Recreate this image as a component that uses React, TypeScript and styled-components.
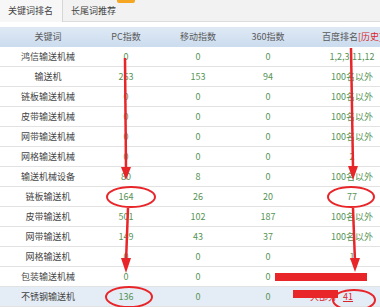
import styled, { createGlobalStyle } from "styled-components";

const GlobalStyle = createGlobalStyle`
  html, body {
    margin: 0;
    padding: 0;
    background: #fff;
    overflow: hidden;
  }
  body {
    font-family: "Noto Sans CJK SC", "Noto Sans", sans-serif;
  }
`

interface RankRow {
  keyword: string;
  pc: string;
  mobile: string;
  so: string;
  baidu: string;
}

const rows: RankRow[] = [
  { keyword: '鸿信输送机械', pc: '0', mobile: '0', so: '0', baidu: '1,2,3,11,12' },
  { keyword: '输送机', pc: '263', mobile: '153', so: '94', baidu: '100名以外' },
  { keyword: '链板输送机械', pc: '0', mobile: '0', so: '0', baidu: '100名以外' },
  { keyword: '皮带输送机械', pc: '0', mobile: '0', so: '0', baidu: '100名以外' },
  { keyword: '网带输送机械', pc: '0', mobile: '0', so: '0', baidu: '100名以外' },
  { keyword: '网格输送机械', pc: '0', mobile: '0', so: '0', baidu: '2' },
  { keyword: '输送机械设备', pc: '80', mobile: '8', so: '0', baidu: '100名以外' },
  { keyword: '链板输送机', pc: '164', mobile: '26', so: '20', baidu: '77' },
  { keyword: '皮带输送机', pc: '501', mobile: '102', so: '187', baidu: '100名以外' },
  { keyword: '网带输送机', pc: '149', mobile: '43', so: '37', baidu: '100名以外' },
  { keyword: '网格输送机', pc: '0', mobile: '0', so: '0', baidu: '1' },
  { keyword: '包装输送机械', pc: '0', mobile: '0', so: '0', baidu: '' },
]

const Page = styled.div`
  position: relative;
  width: 380px;
  height: 307px;
  overflow: hidden;
`

const TabBar = styled.div`
  position: relative;
  display: flex;
  height: 22px;
  box-sizing: border-box;
  background: #f2f2f2;
  border-bottom: 1px solid #dcdcdc;
`

const Tab = styled.div<{ $active?: boolean }>`
  height: ${({ $active }) => ($active ? '22px' : '21px')};
  box-sizing: border-box;
  padding: 0 9px 0 8px;
  font-size: 9px;
  line-height: 21px;
  color: #444;
  background: ${({ $active }) => ($active ? '#f7f7f7' : 'transparent')};
  border-right: ${({ $active }) => ($active ? '1px solid #d6d6d6' : 'none')};
`

const Badge = styled.span`
  position: absolute;
  top: -2px;
  left: 117px;
  width: 18px;
  height: 5px;
  border-radius: 2px;
  background: #f5a623;
`

const Gap = styled.div`
  height: 5px;
`

const Table = styled.div`
  width: 408px;
  font-size: 9px;
`

const Row = styled.div<{ $head?: boolean; $highlight?: boolean }>`
  display: grid;
  grid-template-columns: 96px 60px 84px 56px 112px;
  height: 20px;
  box-sizing: border-box;
  align-items: center;
  background: ${({ $head, $highlight }) =>
    $head ? 'linear-gradient(#dfe9f5, #cbdcee)' : $highlight ? '#e4ecf6' : '#fff'};
  border-bottom: ${({ $head }) => ($head ? 'none' : '1px solid #e2e2e2')};
`

const Cell = styled.div<{ $kind?: 'head' | 'word' | 'num'; $left?: boolean }>`
  text-align: ${({ $left }) => ($left ? 'left' : 'center')};
  padding-left: ${({ $left }) => ($left ? '14px' : '0')};
  white-space: nowrap;
  line-height: 20px;
  color: ${({ $kind }) => ($kind === 'head' ? '#5a5a5a' : $kind === 'word' ? '#444' : '#559455')};
`

const History = styled.span`
  color: #d8262a;
`

const Note = styled.span`
  color: #d8262a;
  margin-right: 6px;
`

const RankLink = styled.a`
  color: #d8262a;
  text-decoration: underline;
`

const Marks = styled.svg`
  position: absolute;
  left: 0;
  top: 0;
  pointer-events: none;
`

function Annotations() {
  const red = '#e8262a';
  return (
    <Marks width="380" height="307" viewBox="0 0 380 307">
      <g stroke={red} strokeWidth="2.5" fill="none">
        <line x1="125" y1="58" x2="126" y2="170" />
        <line x1="351" y1="48" x2="353" y2="168" />
        <line x1="128" y1="208" x2="126" y2="262" />
        <line x1="353" y1="208" x2="355" y2="262" />
        <ellipse cx="131" cy="197" rx="24" ry="10" strokeWidth="2" />
        <ellipse cx="351" cy="197" rx="23" ry="10" strokeWidth="2" />
        <ellipse cx="129" cy="297" rx="23" ry="10" strokeWidth="2" />
        <ellipse cx="354" cy="300" rx="21" ry="10" strokeWidth="2" />
      </g>
      <g fill={red}>
        <polygon points="121,167 131,167 126,180" />
        <polygon points="348,166 358,166 353,180" />
        <polygon points="121,258 131,258 126,273" />
        <polygon points="350,258 360,258 355,272" />
        <rect x="275" y="273" width="92" height="8" />
        <rect x="293" y="290" width="45" height="8" />
      </g>
    </Marks>
  )
}

function App() {
  return (
    <>
      <GlobalStyle />
      <Page>
        <TabBar>
          <Tab $active>关键词排名</Tab>
          <Tab>长尾词推荐</Tab>
          <Badge />
        </TabBar>
        <Gap />
        <Table>
          <Row $head>
            <Cell $kind="head">关键词</Cell>
            <Cell $kind="head">PC指数</Cell>
            <Cell $kind="head">移动指数</Cell>
            <Cell $kind="head">360指数</Cell>
            <Cell $kind="head">百度排名<History>[历史]</History></Cell>
          </Row>
          {rows.map((each) =>
            <Row key={each.keyword}>
              <Cell $kind="word">{each.keyword}</Cell>
              <Cell $kind="num">{each.pc}</Cell>
              <Cell $kind="num">{each.mobile}</Cell>
              <Cell $kind="num">{each.so}</Cell>
              <Cell $kind="num">{each.baidu}</Cell>
            </Row>
          )}
          <Row $highlight>
            <Cell $kind="word">不锈钢输送机</Cell>
            <Cell $kind="num">136</Cell>
            <Cell $kind="num">0</Cell>
            <Cell $kind="num">0</Cell>
            <Cell $kind="num" $left><Note>大部分</Note><RankLink href="#">41</RankLink></Cell>
          </Row>
        </Table>
        <Annotations />
      </Page>
    </>
  )
}

export default App;
